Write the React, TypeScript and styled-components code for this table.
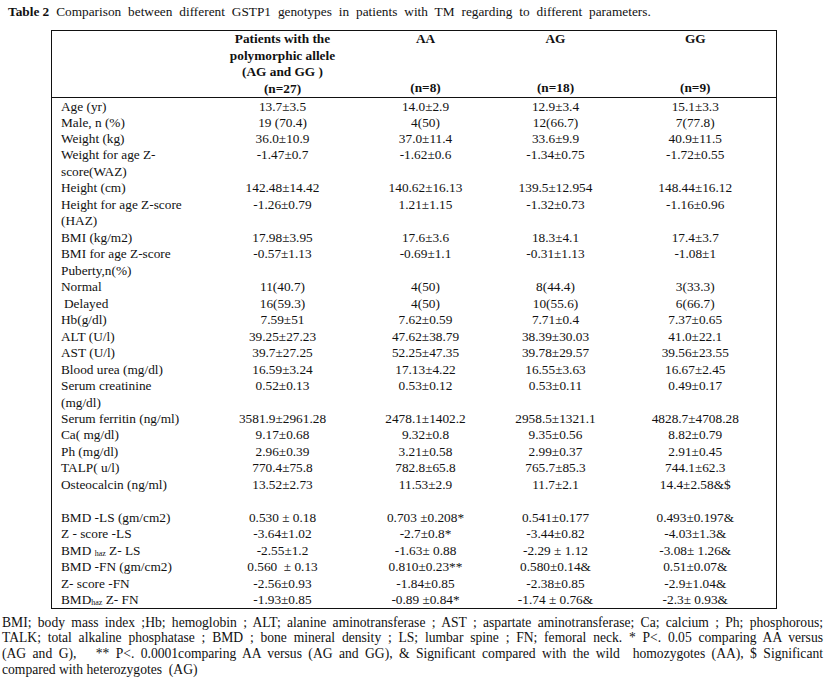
import * as React from 'react';
import styled, { createGlobalStyle } from 'styled-components';

const GlobalStyle = createGlobalStyle`
  html, body {
    margin: 0;
    padding: 0;
    background: #fff;
  }
  body {
    font-family: "Liberation Serif", "Times New Roman", serif;
    color: #111;
  }
`;

const Page = styled.div`
  width: 826px;
  height: 679px;
  padding: 4px 3px 0 2px;
  box-sizing: border-box;
  overflow: hidden;
`;

const Caption = styled.div`
  font-size: 13.3px;
  line-height: 16px;
  padding-left: 6px;
  word-spacing: 3.6px;
  b {
    font-weight: bold;
    word-spacing: 0;
  }
`;

const Table = styled.table`
  margin: 10px 0 0 49px;
  border-collapse: collapse;
  border: 1px solid #111;
  table-layout: fixed;
  width: 725px;
  font-size: 13.3px;
  line-height: 14.5px;
`;

const Head = styled.th`
  font-weight: bold;
  padding: 0;
  height: 66px;
  vertical-align: top;
  border-bottom: 1px solid #111;
  text-align: center;
`;

const HeadInner = styled.div`
  display: flex;
  flex-direction: column;
  justify-content: space-between;
  height: 66px;
  line-height: 16.6px;
`;

const BodyRow = styled.tr<{ $lines: number }>`
  height: ${(p) => p.$lines * 16.48}px;
`;

const Label = styled.td<{ $indent?: boolean }>`
  padding: 1.5px 0 0 ${(p) => (p.$indent ? 12 : 9)}px;
  vertical-align: top;
  text-align: left;
  & > div + div {
    margin-top: 1.98px;
  }
`;

const Value = styled.td`
  padding: 1.5px 0 0 0;
  vertical-align: top;
  text-align: center;
  white-space: pre;
`;

const Sub = styled.span`
  font-size: 8px;
  line-height: 0;
  vertical-align: -1px;
`;

const Notes = styled.div`
  margin-top: 6px;
  font-size: 13.6px;
  line-height: 15.7px;
`;

const NoteLine = styled.div<{ $last?: boolean }>`
  text-align: justify;
  text-align-last: ${(p) => (p.$last ? 'left' : 'justify')};
  white-space: pre-wrap;
`;

type Row = { label: React.ReactNode[]; values: string[]; indent?: boolean };

const rows: Row[] = [
  { label: ['Age (yr)'], values: ['13.7±3.5', '14.0±2.9', '12.9±3.4', '15.1±3.3'] },
  { label: ['Male, n (%)'], values: ['19 (70.4)', '4(50)', '12(66.7)', '7(77.8)'] },
  { label: ['Weight (kg)'], values: ['36.0±10.9', '37.0±11.4', '33.6±9.9', '40.9±11.5'] },
  { label: ['Weight for age Z-', 'score(WAZ)'], values: ['-1.47±0.7', '-1.62±0.6', '-1.34±0.75', '-1.72±0.55'] },
  { label: ['Height (cm)'], values: ['142.48±14.42', '140.62±16.13', '139.5±12.954', '148.44±16.12'] },
  { label: ['Height for age Z-score', '(HAZ)'], values: ['-1.26±0.79', '1.21±1.15', '-1.32±0.73', '-1.16±0.96'] },
  { label: ['BMI (kg/m2)'], values: ['17.98±3.95', '17.6±3.6', '18.3±4.1', '17.4±3.7'] },
  { label: ['BMI for age Z-score'], values: ['-0.57±1.13', '-0.69±1.1', '-0.31±1.13', '-1.08±1'] },
  { label: ['Puberty,n(%)'], values: ['', '', '', ''] },
  { label: ['Normal'], values: ['11(40.7)', '4(50)', '8(44.4)', '3(33.3)'] },
  { label: ['Delayed'], values: ['16(59.3)', '4(50)', '10(55.6)', '6(66.7)'], indent: true },
  { label: ['Hb(g/dl)'], values: ['7.59±51', '7.62±0.59', '7.71±0.4', '7.37±0.65'] },
  { label: ['ALT (U/l)'], values: ['39.25±27.23', '47.62±38.79', '38.39±30.03', '41.0±22.1'] },
  { label: ['AST (U/l)'], values: ['39.7±27.25', '52.25±47.35', '39.78±29.57', '39.56±23.55'] },
  { label: ['Blood urea (mg/dl)'], values: ['16.59±3.24', '17.13±4.22', '16.55±3.63', '16.67±2.45'] },
  { label: ['Serum creatinine', '(mg/dl)'], values: ['0.52±0.13', '0.53±0.12', '0.53±0.11', '0.49±0.17'] },
  { label: ['Serum ferritin (ng/ml)'], values: ['3581.9±2961.28', '2478.1±1402.2', '2958.5±1321.1', '4828.7±4708.28'] },
  { label: ['Ca( mg/dl)'], values: ['9.17±0.68', '9.32±0.8', '9.35±0.56', '8.82±0.79'] },
  { label: ['Ph (mg/dl)'], values: ['2.96±0.39', '3.21±0.58', '2.99±0.37', '2.91±0.45'] },
  { label: ['TALP( u/l)'], values: ['770.4±75.8', '782.8±65.8', '765.7±85.3', '744.1±62.3'] },
  { label: ['Osteocalcin (ng/ml)'], values: ['13.52±2.73', '11.53±2.9', '11.7±2.1', '14.4±2.58&$'] },
  { label: ['\u00a0'], values: ['', '', '', ''] },
  { label: ['BMD -LS (gm/cm2)'], values: ['0.530 ± 0.18', '0.703 ±0.208*', '0.541±0.177', '0.493±0.197&'] },
  { label: ['Z - score -LS'], values: ['-3.64±1.02', '-2.7±0.8*', '-3.44±0.82', '-4.03±1.3&'] },
  { label: [<>BMD <Sub>haz</Sub> Z- LS</>], values: ['-2.55±1.2', '-1.63± 0.88', '-2.29 ± 1.12', '-3.08± 1.26&'] },
  { label: ['BMD -FN (gm/cm2)'], values: ['0.560  ± 0.13', '0.810±0.23**', '0.580±0.14&', '0.51±0.07&'] },
  { label: ['Z- score -FN'], values: ['-2.56±0.93', '-1.84±0.85', '-2.38±0.85', '-2.9±1.04&'] },
  { label: [<>BMD<Sub>haz</Sub> Z- FN</>], values: ['-1.93±0.85', '-0.89 ±0.84*', '-1.74 ± 0.76&', '-2.3± 0.93&'] },
];

const notes = [
  'BMI; body mass index ;Hb; hemoglobin ; ALT; alanine aminotransferase ; AST ; aspartate aminotransferase; Ca; calcium ; Ph; phosphorous;',
  'TALK; total alkaline phosphatase ; BMD ; bone mineral density ; LS; lumbar spine ; FN; femoral neck. * P<. 0.05 comparing AA versus',
  '(AG and G),   ** P<. 0.0001comparing AA versus (AG and GG), & Significant compared with the wild  homozygotes (AA), $ Significant',
  'compared with heterozygotes  (AG)',
];

export default function App() {
  return (
    <>
      <GlobalStyle />
      <Page>
        <Caption>
          <b>Table 2</b> Comparison between different GSTP1 genotypes in patients with TM regarding to different parameters.
        </Caption>
        <Table>
          <colgroup>
            <col style={{ width: 159 }} />
            <col style={{ width: 144 }} />
            <col style={{ width: 142 }} />
            <col style={{ width: 118 }} />
            <col style={{ width: 162 }} />
          </colgroup>
          <thead>
            <tr>
              <Head />
              <Head>
                <HeadInner>
                  <span>Patients with the</span>
                  <span>polymorphic allele</span>
                  <span>(AG and GG )</span>
                  <span>(n=27)</span>
                </HeadInner>
              </Head>
              <Head>
                <HeadInner>
                  <span>AA</span>
                  <span>(n=8)</span>
                </HeadInner>
              </Head>
              <Head>
                <HeadInner>
                  <span>AG</span>
                  <span>(n=18)</span>
                </HeadInner>
              </Head>
              <Head>
                <HeadInner>
                  <span>GG</span>
                  <span>(n=9)</span>
                </HeadInner>
              </Head>
            </tr>
          </thead>
          <tbody>
            {rows.map((r, i) => (
              <BodyRow key={i} $lines={r.label.length}>
                <Label $indent={r.indent}>
                  {r.label.map((l, k) => (
                    <div key={k}>{l}</div>
                  ))}
                </Label>
                {r.values.map((v, j) => (
                  <Value key={j}>{v}</Value>
                ))}
              </BodyRow>
            ))}
          </tbody>
        </Table>
        <Notes>
          {notes.map((n, i) => (
            <NoteLine key={i} $last={i === notes.length - 1}>{n}</NoteLine>
          ))}
        </Notes>
      </Page>
    </>
  );
}
